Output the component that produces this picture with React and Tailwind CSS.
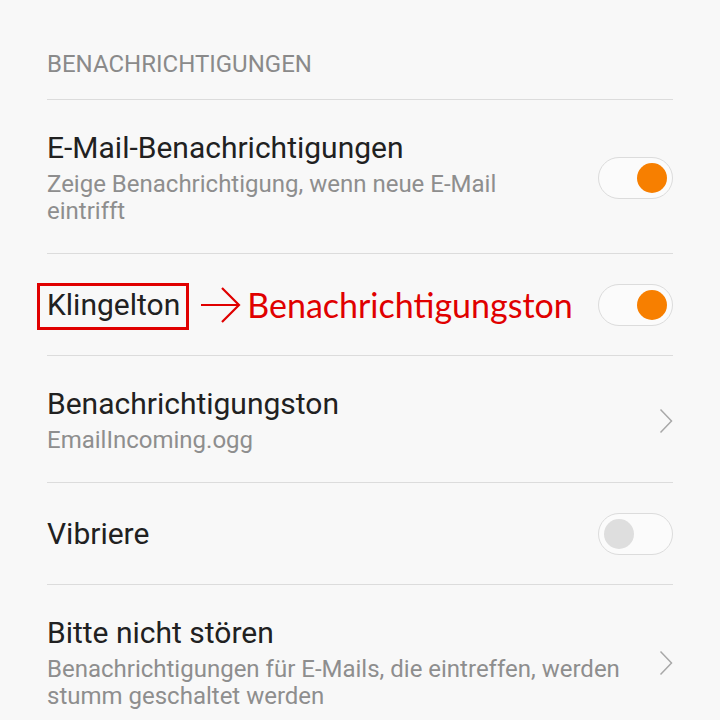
import React from 'react';

const Toggle = ({ on }) => {
  return (
    <div className="w-[75px] h-[42px] shrink-0 rounded-full border-[1.5px] border-[#dcdcdc] bg-[#fbfbfb] flex items-center px-[5px]">
      {on ? (
        <div className="ml-auto w-[30px] h-[30px] rounded-full bg-[#f77f00]"></div>
      ) : (
        <div className="w-[30px] h-[30px] rounded-full bg-[#dedede]"></div>
      )}
    </div>
  );
};

const Chevron = () => (
  <svg width="14" height="26" viewBox="0 0 14 26" className="shrink-0">
    <path d="M1.5 1.5 L12.5 13 L1.5 24.5" fill="none" stroke="#a8a8a8" strokeWidth="1.5" />
  </svg>
);

const Divider = () => <div className="h-px bg-[#dcdcdc]"></div>;

const TextRow = ({ title, subtitle, right }) => {
  return (
    <div className="flex items-center gap-[24px] pt-[31px] pb-[28px]">
      <div className="flex-1 min-w-0">
        <div className="text-[30px] leading-[34px] text-[#212121]">{title}</div>
        <div className="mt-[6px] text-[24px] leading-[27px] text-[#8e8e8e]">{subtitle}</div>
      </div>
      {right}
    </div>
  );
};

export default function App() {
  return (
    <div className="min-h-[720px] bg-[#f8f8f8] px-[47px] pt-[50px] font-['Roboto',sans-serif]">
      {/* Section header */}
      <div className="text-[24px] leading-[28px] text-[#8a8a8a] mb-[21px]">BENACHRICHTIGUNGEN</div>
      <Divider />

      <TextRow
        title="E-Mail-Benachrichtigungen"
        subtitle="Zeige Benachrichtigung, wenn neue E-Mail eintrifft"
        right={<Toggle on />}
      />
      <Divider />

      {/* Klingelton, with the red annotation */}
      <div className="h-[101px] flex items-center">
        <span className="relative text-[30px] leading-[34px] text-[#212121]">
          Klingelton
          <span className="absolute -left-[10px] -right-[9px] -top-[5px] -bottom-[8px] border-[3px] border-[#e00000]"></span>
        </span>
        <svg width="40" height="36" viewBox="0 0 40 36" className="ml-[21px] shrink-0">
          <path d="M0 18 H38 M21 1 L38 18 L21 35" fill="none" stroke="#e00000" strokeWidth="2.2" />
        </svg>
        <span className="ml-[6px] font-['Lato',sans-serif] text-[34px] leading-[36px] text-[#e00000]">Benachrichtigungston</span>
        <div className="ml-auto">
          <Toggle on />
        </div>
      </div>
      <Divider />

      <TextRow title="Benachrichtigungston" subtitle="EmailIncoming.ogg" right={<Chevron />} />
      <Divider />

      <div className="h-[101px] flex items-center justify-between">
        <span className="text-[30px] leading-[34px] text-[#212121]">Vibriere</span>
        <Toggle on={false} />
      </div>
      <Divider />

      <TextRow
        title="Bitte nicht stören"
        subtitle="Benachrichtigungen für E-Mails, die eintreffen, werden stumm geschaltet werden"
        right={<Chevron />}
      />
    </div>
  );
}
